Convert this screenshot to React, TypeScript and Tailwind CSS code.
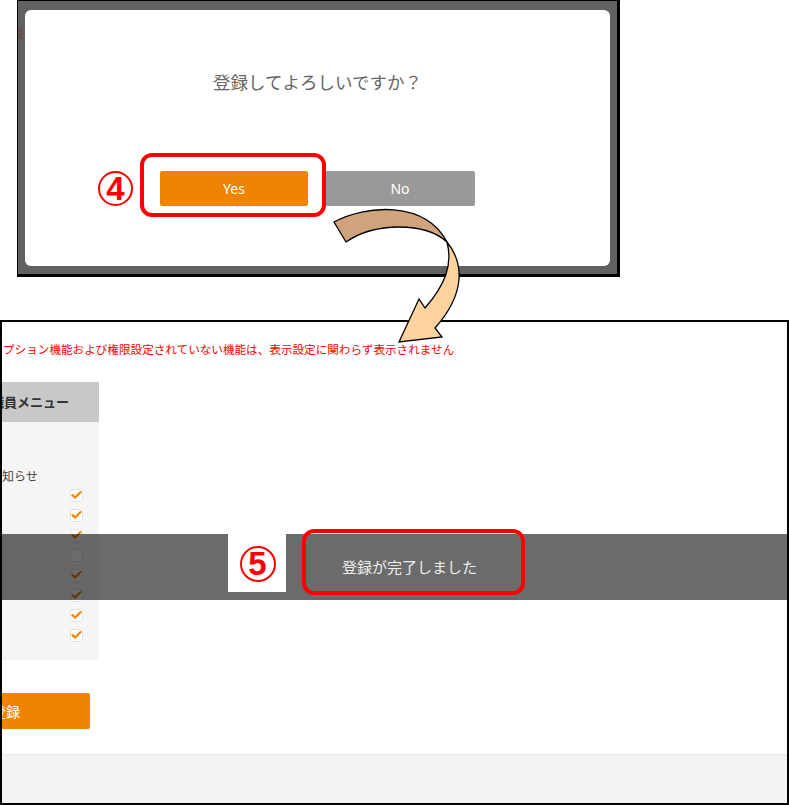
import React from "react";

function Check({ on }: { on: boolean }) {
  return (
    <div className="w-[13px] h-[13px] bg-white border border-[#e2e2e2] rounded-[3px] flex items-center justify-center">
      {on && (
        <svg width="12" height="12" viewBox="0 0 12 12">
          <path d="M1.6 6.2 L4.6 8.8 L10.4 2.8" fill="none" stroke="#f08300" strokeWidth="2.4" strokeLinecap="round" strokeLinejoin="round" />
        </svg>
      )}
    </div>
  );
}

function Circled({ n, size }: { n: string; size: string }) {
  return (
    <div className={`${size} rounded-full border-2 border-[#ff0000] flex items-center justify-center`}>
      <span className="font-['Liberation_Sans',sans-serif] font-bold text-[33px] leading-none text-[#ff0000]">{n}</span>
    </div>
  );
}

export default function App() {
  const checks = [true, true, true, false, true, true, true, true];
  return (
    <div className="relative w-[789px] h-[805px] bg-white overflow-hidden font-['Noto_Sans_CJK_JP',sans-serif]">
      {/* Top dialog screenshot */}
      <div className="relative ml-[17px] w-[603px] h-[277px] border-l border-t border-r-[3px] border-b-[3px] border-black bg-[#616161] pl-[7px] pt-[9px] pr-[7px] pb-[8px] overflow-hidden">
        <span className="absolute left-[-6px] top-[26px] text-[12px] leading-[14px] text-[#7a3a3a]">表</span>
        <div className="h-full w-full rounded-[6px] bg-white flex flex-col items-center pt-[59px]">
          <div className="text-[17.5px] leading-[26px] text-[#666666] whitespace-nowrap">登録してよろしいですか？</div>
          <div className="mt-[76px] flex gap-[17px] font-['Noto_Sans','Noto_Sans_CJK_JP',sans-serif]">
            <div className="w-[148px] h-[35px] rounded-[2px] bg-[#f08300] text-white text-[14px] flex items-center justify-center">Yes</div>
            <div className="w-[150px] h-[35px] rounded-[2px] bg-[#999999] text-white text-[14px] flex items-center justify-center">No</div>
          </div>
        </div>
      </div>

      {/* Bottom page screenshot */}
      <div className="relative mt-[43px] w-[789px] h-[485px] border-2 border-black flex flex-col overflow-hidden">
        <div className="mt-[19px] pl-[1px] text-[11.6px] leading-[16px] text-[#ff0000] whitespace-nowrap">
          プション機能および権限設定されていない機能は、表示設定に関わらず表示されません
        </div>
        <div className="mt-[25px] w-[97px]">
          <div className="h-[40px] bg-[#c8c8c8] flex items-center overflow-hidden">
            <span className="ml-[-11px] text-[13px] font-bold text-[#333333] whitespace-nowrap">職員メニュー</span>
          </div>
          <div className="bg-[#f5f5f5] pt-[46px] pb-[15px] overflow-hidden">
            <div className="ml-[-12px] text-[12px] leading-[16px] text-[#444444] whitespace-nowrap">お知らせ</div>
            <div className="mt-[1px] flex flex-col">
              {checks.map((c, i) => (
                <div key={i} className="h-[20px] pl-[68px] flex items-center">
                  <Check on={c} />
                </div>
              ))}
            </div>
          </div>
        </div>
        <div className="mt-[33px] w-[88px] h-[36px] bg-[#f08300] rounded-r-[2px] overflow-hidden flex items-center">
          <span className="ml-[-10px] text-[14px] text-white whitespace-nowrap">登録</span>
        </div>
        <div className="mt-auto h-[49px] bg-[#f3f3f3] border-t border-[#e8e8e8]" />

        {/* toast overlay */}
        <div className="absolute left-0 right-0 top-[212px] h-[66px] bg-black/[0.58] flex items-center">
          <span className="ml-[340px] text-[15px] leading-[20px] text-[#eeeeee] whitespace-nowrap">登録が完了しました</span>
        </div>
      </div>

      {/* Annotations */}
      <div className="absolute left-[140px] top-[153px] w-[186px] h-[64px] border-4 border-[#ff0000] rounded-[12px]" />
      <div className="absolute left-[98px] top-[171px]">
        <Circled n="4" size="w-[35px] h-[35px]" />
      </div>

      <div className="absolute left-[228px] top-[534px] w-[58px] h-[58px] bg-white flex items-center justify-center pl-[1px] pt-[1px]">
        <Circled n="5" size="w-[36px] h-[36px]" />
      </div>
      <div className="absolute left-[302px] top-[529px] w-[223px] h-[66px] border-4 border-[#ff0000] rounded-[12px]" />

      <svg className="absolute left-0 top-0 pointer-events-none" width="789" height="805" viewBox="0 0 789 805">
        <path
          d="M334 222 C365 205 425 200 447 242 C425 222 375 222 346 242 Z"
          fill="#cfa47c"
          stroke="#000"
          strokeWidth="1.3"
          strokeLinejoin="round"
        />
        <path
          d="M447 242 C463 262 467 292 435 328 L442 337 L399 342 L419 299 L425 308 C445 285 453 265 447 242 Z"
          fill="#ffd29e"
          stroke="#000"
          strokeWidth="1.3"
          strokeLinejoin="miter"
        />
      </svg>
    </div>
  );
}
